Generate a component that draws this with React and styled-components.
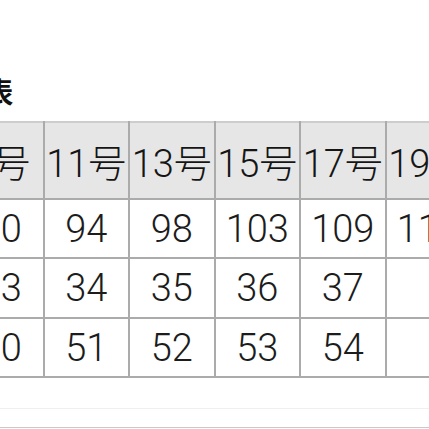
import * as React from "react";
import styled, { createGlobalStyle } from "styled-components";

const GlobalStyle = createGlobalStyle`
	html, body {
		margin: 0;
		padding: 0;
		background: #ffffff;
	}
	body {
		font-family: Roboto, "Noto Sans CJK JP", "Noto Sans", sans-serif;
		color: #1a1a1a;
	}
`;

const PageStyle = styled.div`
	width: 429px;
	height: 429px;
	overflow: hidden;
	padding-top: 74px;
	box-sizing: border-box;
`;

const TitleStyle = styled.h3`
	margin: 0 0 0 -98px;
	font-family: "Noto Sans CJK JP", sans-serif;
	font-size: 28px;
	line-height: 34px;
	font-weight: 700;
	color: #111111;
	white-space: nowrap;
`;

const SizeTableStyle = styled.table`
	margin: 13px 0 0 -43px;
	border-collapse: collapse;
	table-layout: fixed;
	width: 513px;
	border-top: 2px solid #cdcdcd;
`;

const HeadCellStyle = styled.th`
	width: 83.5px;
	height: 75px;
	padding: 0;
	background: #e6e6e6;
	border-left: 2px solid #ababab;
	border-right: 2px solid #ababab;
	border-bottom: 2px solid #ababab;
	font-size: 38px;
	font-weight: 300;
	color: #151515;
	text-align: center;
	white-space: nowrap;
	overflow: hidden;
`;

const CellStyle = styled.td`
	height: ${({ $tall }) => ($tall ? "58px" : "57px")};
	padding: 0;
	background: #ffffff;
	border: 2px solid #ababab;
	font-size: 38px;
	font-weight: 300;
	color: #1c1c1c;
	text-align: center;
	white-space: nowrap;
	overflow: hidden;
`;

const FooterStyle = styled.div`
	margin-top: 30px;
	border-top: 1px solid #efefef;
	height: 18px;
	border-bottom: 1px solid #c9c9c9;
`;

const sizes = ["9号", "11号", "13号", "15号", "17号", "19号"];

const rows = [
	["90", "94", "98", "103", "109", "115"],
	["33", "34", "35", "36", "37", ""],
	["50", "51", "52", "53", "54", ""],
];

const App = () => {
	return (
		<PageStyle>
			<GlobalStyle />
			<TitleStyle>サイズ表</TitleStyle>

			<SizeTableStyle>
				<thead>
					<tr>
						{sizes.map((size) => (
							<HeadCellStyle key={size}>{size}</HeadCellStyle>
						))}
					</tr>
				</thead>
				<tbody>
					{rows.map((row, idx) => (
						<tr key={idx}>
							{row.map((value, i) => (
								<CellStyle key={i} $tall={idx === 1}>
									{value}
								</CellStyle>
							))}
						</tr>
					))}
				</tbody>
			</SizeTableStyle>

			<FooterStyle />
		</PageStyle>
	);
};

export default App;
